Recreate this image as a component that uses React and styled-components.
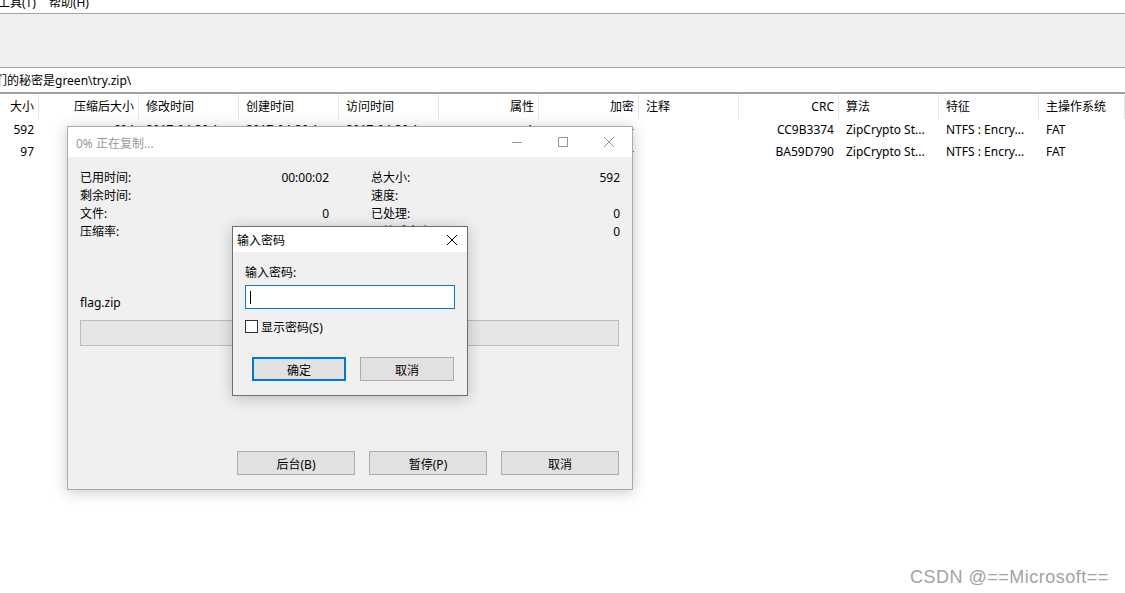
import React from "react";
import styled, { createGlobalStyle } from "styled-components";

const GlobalStyles = createGlobalStyle`
  * {
    box-sizing: border-box;
  }
  html,
  body {
    margin: 0;
    padding: 0;
    height: 100%;
  }
  body {
    font-family: "Noto Sans", "Noto Sans CJK SC", sans-serif;
    font-size: 12px;
    color: #000;
    background-color: #fff;
    overflow: hidden;
  }
  #root {
    height: 100%;
  }
`;

const COLUMNS = "39px repeat(10, 100px) 1fr";

const Desktop = styled.div`
  position: relative;
  width: 1125px;
  height: 593px;
  overflow: hidden;
  background-color: #fff;
`;

const MenuBar = styled.div`
  display: flex;
  gap: 13px;
  height: 14px;
  overflow: hidden;
  border-bottom: 1px solid #a0a0a0;
`;

const MenuItem = styled.span`
  display: block;
  line-height: 18px;
  margin-top: -6px;
  margin-left: ${(p) => p.$shift || 0}px;
`;

const Toolbar = styled.div`
  height: 54px;
  background-color: #f0f0f0;
  border-bottom: 1px solid #a0a0a0;
`;

const AddressBar = styled.div`
  height: 26px;
  line-height: 24px;
  padding-top: 1px;
  border-bottom: 2px solid #a0a0a0;
  white-space: nowrap;
  overflow: hidden;
`;

const AddressText = styled.span`
  display: inline-block;
  margin-left: -5px;
`;

const HeaderRow = styled.div`
  display: grid;
  grid-template-columns: ${COLUMNS};
  height: 24px;
`;

const HeadCell = styled.div`
  position: relative;
  line-height: 24px;
  padding: ${(p) => (p.$right ? "1px 5px 0 0" : "1px 0 0 7px")};
  text-align: ${(p) => (p.$right ? "right" : "left")};
  white-space: nowrap;
  &::after {
    content: "";
    position: absolute;
    right: 0;
    top: 1px;
    bottom: 0;
    width: 1px;
    background-color: #e5e5e5;
  }
`;

const Row = styled.div`
  display: grid;
  grid-template-columns: ${COLUMNS};
  height: 22px;
`;

const Cell = styled.div`
  line-height: 22px;
  padding: ${(p) => (p.$right ? "1px 5px 0 0" : "1px 0 0 7px")};
  text-align: ${(p) => (p.$right ? "right" : "left")};
  white-space: nowrap;
  overflow: hidden;
`;

/* windows laid over the file list */

const Window = styled.div`
  position: absolute;
  left: ${(p) => p.$x}px;
  top: ${(p) => p.$y}px;
  width: ${(p) => p.$w}px;
  height: ${(p) => p.$h}px;
  display: flex;
  flex-direction: column;
  border: 1px solid ${(p) => p.$border};
  background-color: #f0f0f0;
  box-shadow: 0 2px 14px rgba(0, 0, 0, 0.22);
`;

const TitleBar = styled.div`
  display: flex;
  align-items: center;
  height: ${(p) => p.$h}px;
  flex-shrink: 0;
  background-color: #fff;
  padding-left: ${(p) => p.$pad}px;
`;

const Title = styled.span`
  flex: 1;
  color: ${(p) => p.$color};
  white-space: nowrap;
  margin-top: ${(p) => p.$nudge || 0}px;
`;

const Caption = styled.div`
  display: flex;
  align-items: center;
  justify-content: center;
  width: ${(p) => p.$w}px;
  height: 100%;
`;

const Body = styled.div`
  flex: 1;
  display: flex;
  flex-direction: column;
  padding: ${(p) => p.$top}px ${(p) => p.$right || 12}px 14px 12px;
`;

const Stats = styled.div`
  display: grid;
  grid-template-columns: 249px 249px;
  column-gap: 42px;
`;

const Stat = styled.div`
  display: flex;
  justify-content: space-between;
  line-height: 18px;
  height: 18px;
`;

const FileName = styled.div`
  margin-top: 53px;
  line-height: 18px;
`;

const Progress = styled.div`
  margin-top: 8px;
  height: 26px;
  background-color: #e6e6e6;
  border: 1px solid #bcbcbc;
`;

const ButtonRow = styled.div`
  display: flex;
  gap: 14px;
  justify-content: ${(p) => (p.$end ? "flex-end" : "flex-start")};
  margin-top: ${(p) => (p.$gap == null ? "auto" : `${p.$gap}px`)};
  padding-left: ${(p) => p.$indent || 0}px;
`;

const Button = styled.div`
  width: ${(p) => p.$w}px;
  height: 24px;
  display: flex;
  align-items: center;
  justify-content: center;
  padding-top: 1px;
  background-color: #e1e1e1;
  border: ${(p) => (p.$default ? "2px solid #0078d7" : "1px solid #adadad")};
`;

const Label = styled.div`
  line-height: 18px;
`;

const Input = styled.div`
  margin-top: 3px;
  width: 210px;
  height: 24px;
  background-color: #fff;
  border: 1px solid #0078d7;
  display: flex;
  align-items: center;
  padding-left: 4px;
`;

const Caret = styled.span`
  display: block;
  width: 1px;
  height: 13px;
  background-color: #000;
`;

const CheckRow = styled.div`
  display: flex;
  align-items: center;
  margin-top: 9px;
  height: 18px;
  line-height: 18px;
`;

const Box = styled.span`
  display: block;
  width: 13px;
  height: 13px;
  border: 1px solid #333;
  background-color: #fff;
  margin-right: 3px;
  margin-top: -1px;
`;

const CheckText = styled.span`
  padding-top: 2px;
`;

const Watermark = styled.div`
  position: absolute;
  left: 910px;
  top: 566px;
  line-height: 22px;
  font-family: "Liberation Sans", Arial, sans-serif;
  font-size: 18px;
  letter-spacing: 0.5px;
  color: #a3a3a3;
  white-space: nowrap;
`;

const headers = [
  ["大小", true],
  ["压缩后大小", true],
  ["修改时间"],
  ["创建时间"],
  ["访问时间"],
  ["属性", true],
  ["加密", true],
  ["注释"],
  ["CRC", true],
  ["算法"],
  ["特征"],
  ["主操作系统"],
];

const rows = [
  ["592", "604", "2017-04-30 1...", "2017-04-30 1...", "2017-04-30 1...", "A", "+", "", "CC9B3374", "ZipCrypto St...", "NTFS : Encry...", "FAT"],
  ["97", "109", "2017-04-30 1...", "2017-04-30 1...", "2017-04-30 1...", "A", "+", "", "BA59D790", "ZipCrypto St...", "NTFS : Encry...", "FAT"],
];

const Minimize = ({ color }) => (
  <svg width="10" height="10" viewBox="0 0 10 10">
    <path d="M0 5.5H10" stroke={color} strokeWidth="1" />
  </svg>
);

const Maximize = ({ color }) => (
  <svg width="10" height="10" viewBox="0 0 10 10">
    <rect x="0.5" y="0.5" width="9" height="9" fill="none" stroke={color} strokeWidth="1" />
  </svg>
);

const Close = ({ color }) => (
  <svg width="10" height="10" viewBox="0 0 10 10">
    <path d="M0 0L10 10M10 0L0 10" stroke={color} strokeWidth="1" />
  </svg>
);

const left = [
  ["已用时间:", "00:00:02"],
  ["剩余时间:", ""],
  ["文件:", "0"],
  ["压缩率:", ""],
];

const right = [
  ["总大小:", "592"],
  ["速度:", ""],
  ["已处理:", "0"],
  ["压缩后大小:", "0"],
];

export default function App() {
  return (
    <Desktop>
      <GlobalStyles />
      <MenuBar>
        <MenuItem $shift={-2}>工具(T)</MenuItem>
        <MenuItem>帮助(H)</MenuItem>
      </MenuBar>
      <Toolbar />
      <AddressBar>
        <AddressText>们的秘密是green\try.zip\</AddressText>
      </AddressBar>
      <HeaderRow>
        {headers.map(([t, r]) => (
          <HeadCell key={t} $right={r}>
            {t}
          </HeadCell>
        ))}
      </HeaderRow>
      {rows.map((row, i) => (
        <Row key={i}>
          {row.map((v, j) => (
            <Cell key={j} $right={headers[j][1]}>
              {v}
            </Cell>
          ))}
        </Row>
      ))}

      <Window $x={67} $y={126} $w={566} $h={364} $border="#aaaaaa">
        <TitleBar $h={30} $pad={8}>
          <Title $color="#999" $nudge={1}>0% 正在复制...</Title>
          <Caption $w={46}>
            <Minimize color="#999" />
          </Caption>
          <Caption $w={46}>
            <Maximize color="#999" />
          </Caption>
          <Caption $w={46}>
            <Close color="#999" />
          </Caption>
        </TitleBar>
        <Body $top={12} $right={13}>
          <Stats>
            {left.map((l, i) => (
              <React.Fragment key={i}>
                <Stat>
                  <span>{l[0]}</span>
                  <span>{l[1]}</span>
                </Stat>
                <Stat>
                  <span>{right[i][0]}</span>
                  <span>{right[i][1]}</span>
                </Stat>
              </React.Fragment>
            ))}
          </Stats>
          <FileName>flag.zip</FileName>
          <Progress />
          <ButtonRow $end>
            <Button $w={118}>后台(B)</Button>
            <Button $w={118}>暂停(P)</Button>
            <Button $w={118}>取消</Button>
          </ButtonRow>
        </Body>
      </Window>

      <Window $x={232} $y={226} $w={236} $h={170} $border="#6e6e6e">
        <TitleBar $h={25} $pad={4}>
          <Title $color="#000">输入密码</Title>
          <Caption $w={30}>
            <Close color="#000" />
          </Caption>
        </TitleBar>
        <Body $top={12}>
          <Label>输入密码:</Label>
          <Input>
            <Caret />
          </Input>
          <CheckRow>
            <Box />
            <CheckText>显示密码(S)</CheckText>
          </CheckRow>
          <ButtonRow $gap={21} $indent={7}>
            <Button $w={94} $default>
              确定
            </Button>
            <Button $w={94}>取消</Button>
          </ButtonRow>
        </Body>
      </Window>

      <Watermark>CSDN @==Microsoft==</Watermark>
    </Desktop>
  );
}
